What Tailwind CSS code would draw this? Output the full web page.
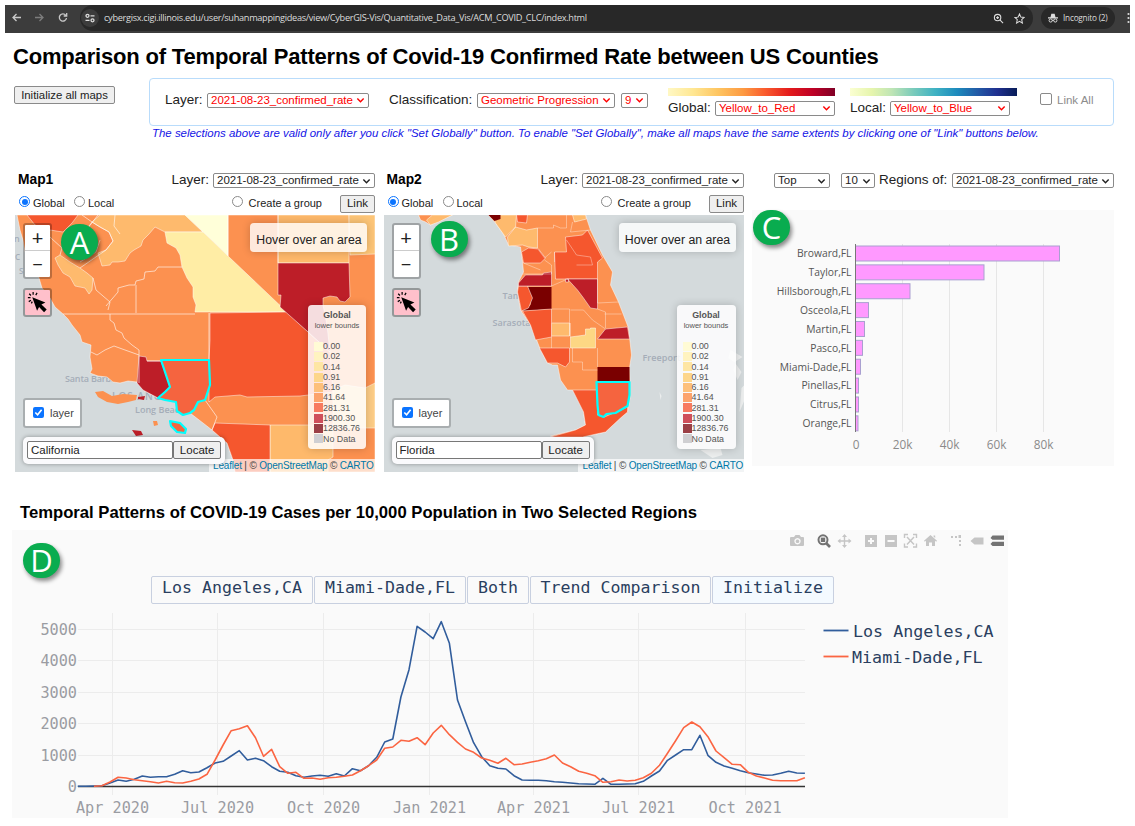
<!DOCTYPE html>
<html lang="en">
<head>
<meta charset="utf-8">
<title>Comparison of Temporal Patterns</title>
<script src="https://cdn.jsdelivr.net/npm/@tailwindcss/browser@4"></script>
</head>
<body class="w-[1135px] h-[826px] overflow-hidden bg-white text-black font-['Liberation_Sans',sans-serif] whitespace-nowrap">
<svg class="hidden">
  <symbol id="chev" viewBox="0 0 10 10"><path d="M1.5 2.7 5 6.3 8.5 2.7" fill="none" stroke="currentColor" stroke-width="1.6"/></symbol>
  <symbol id="click" viewBox="0 0 24 24"><path d="M6 6 21 12 16.500 14.200 22.500 20 19.500 23 13.800 17 11.500 21.500Z" fill="#000"/><path d="M1 6.500h3M2 11l2.500-1.500M2.500 2l2 2M7 0v3M11.500 1 10 3.500M5 13l1-2" stroke="#000" stroke-width="1.4"/></symbol>
</svg>

<!-- Browser bar -->
<header class="mt-[5px] ml-[5px] w-[1125px] h-[28px] bg-[#3c3c3c] flex items-center text-[#dcdcdc] font-['Open_Sans',sans-serif] overflow-hidden">
  <svg class="w-[75px] h-[28px] shrink-0" fill="none" stroke="#c8c8c8" stroke-width="1.3" viewBox="0 0 75 28"><path d="M16 12.500H8M11.500 9 8 12.500 11.500 16"/><path stroke="#7d7d7d" d="M30 12.500h8M34.500 9 38 12.500 34.500 16"/><path d="M60.800 10.300A3.600 3.600 0 1 0 61.500 13M61.700 8v3h-3"/></svg>
  <div class="flex items-center h-[26px] -mt-[2px] w-[953px] rounded-full bg-[#282828] shrink-0 pr-[8px]">
    <svg class="w-[18px] h-[18px] mr-[5px] ml-px" viewBox="0 0 18 18" fill="none" stroke="#ddd" stroke-width="1.3"><circle cx="9" cy="9" r="9" fill="#3c3c3c" stroke="none"/><circle cx="6.500" cy="6.800" r="1.500"/><path d="M9.500 6.800h4M4.500 11.300h4"/><circle cx="11.500" cy="11.300" r="1.500"/></svg>
    <span class="text-[9.200px] tracking-[-0.310px] grow">cybergisx.cigi.illinois.edu/user/suhanmappingideas/view/CyberGIS-Vis/Quantitative_Data_Vis/ACM_COVID_CLC/index.html</span>
    <svg class="w-[11px] h-[11px] mr-[10px]" viewBox="0 0 12 12" fill="none" stroke="#ddd" stroke-width="1.200"><circle cx="5" cy="5" r="3.500"/><path d="M7.500 7.500 11 11M3.500 5h3M5 3.500v3"/></svg>
    <svg class="w-[11px] h-[11px]" viewBox="0 0 12 12" fill="none" stroke="#ddd" stroke-width="1.100"><path d="M6 1 7.500 4.500 11 4.800 8.400 7.200 9.200 11 6 9 2.800 11 3.600 7.200 1 4.800 4.500 4.500Z"/></svg>
  </div>
  <div class="flex items-center h-[22px] -mt-[2px] ml-[8px] w-[74px] rounded-full bg-[#282828] pl-[7px] text-[8.200px] tracking-[-0.200px] shrink-0">
    <svg class="w-[10px] h-[10px] mr-[5px] shrink-0" viewBox="0 0 12 12" fill="#ddd"><path d="M3 5 4 1h4l1 4ZM0 5.200h12v1.300H0Z"/><g fill="none" stroke="#ddd" stroke-width="1.200"><circle cx="3.200" cy="9" r="1.900"/><circle cx="8.800" cy="9" r="1.900"/><path d="M5 8.800h2"/></g></svg>Incognito (2)
  </div>
  <svg class="ml-[12px] -mt-[3px] w-[3px] h-[12px] shrink-0" viewBox="0 0 3 12" fill="#ddd"><circle cx="1.500" cy="2" r="1.100"/><circle cx="1.500" cy="6" r="1.100"/><circle cx="1.500" cy="10" r="1.100"/></svg>
</header>

<h1 class="h-[46px] pt-[10px] pl-[13px] text-[22px] tracking-[-0.180px] leading-[27px] font-bold">Comparison of Temporal Patterns of Covid-19 Confirmed Rate between US Counties</h1>

<!-- Global controls -->
<section class="flex h-[48px] items-start pl-[14px]">
  <button class="mt-[7px] w-[101px] h-[18px] pt-px border border-[#8a8a8a] rounded-[2px] bg-[#efefef] text-[11.400px] leading-none text-[#222]">Initialize all maps</button>
  <div class="ml-[34px] -mt-px w-[965px] h-[48px] border border-[#b9dcfb] rounded-[4px] flex text-[13.500px] text-[#222]">
    <div class="flex items-center h-[18px] mt-[12px] ml-[15px] w-[224px]"><span class="w-[42px]">Layer:</span>
      <span class="flex items-center justify-between w-[162px] h-[15px] border border-[#8a8a8a] rounded-[2px] px-[3px] pt-px text-[11.500px] text-[#f00]">2021-08-23_confirmed_rate<svg class="w-[9px] h-[9px]"><use href="#chev"/></svg></span></div>
    <div class="flex items-center h-[18px] mt-[12px] w-[278px]"><span class="w-[88px]">Classification:</span>
      <span class="flex items-center justify-between w-[138px] h-[15px] border border-[#8a8a8a] rounded-[2px] px-[3px] pt-px text-[11.500px] text-[#f00]">Geometric Progression<svg class="w-[9px] h-[9px]"><use href="#chev"/></svg></span>
      <span class="flex items-center justify-between ml-[6px] w-[27px] h-[15px] border border-[#8a8a8a] rounded-[2px] px-[3px] pt-px text-[11.500px] text-[#f00]">9<svg class="w-[9px] h-[9px]"><use href="#chev"/></svg></span></div>
    <div class="mt-[9px] ml-px w-[182px]">
      <div class="w-[167px] h-[8px] bg-[linear-gradient(90deg,#fff8c4,#ffe793_15%,#fec561_30%,#fd9a42_45%,#fa5c2e_58%,#e31a1c_73%,#bd0026_87%,#800026)]"></div>
      <div class="flex items-center h-[18px] mt-[3px]"><span class="w-[47px]">Global:</span>
      <span class="flex items-center justify-between w-[120px] h-[15px] border border-[#8a8a8a] rounded-[2px] px-[3px] pt-px text-[11.500px] text-[#f00]">Yellow_to_Red<svg class="w-[9px] h-[9px]"><use href="#chev"/></svg></span></div>
    </div>
    <div class="mt-[9px] w-[190px]">
      <div class="w-[167px] h-[8px] bg-[linear-gradient(90deg,#fbffd2,#e6f5ad_13%,#bfe5b5_25%,#7acbbb_38%,#3fb2c3_51%,#1d8bbd_64%,#2258a5_77%,#203090_88%,#081d58)]"></div>
      <div class="flex items-center h-[18px] mt-[3px]"><span class="w-[40px]">Local:</span>
      <span class="flex items-center justify-between w-[120px] h-[15px] border border-[#8a8a8a] rounded-[2px] px-[3px] pt-px text-[11.500px] text-[#f00]">Yellow_to_Blue<svg class="w-[9px] h-[9px]"><use href="#chev"/></svg></span></div>
    </div>
    <div class="flex items-center mt-[13px] h-[18px] text-[#8c8c8c] text-[11.500px]"><span class="w-[12px] h-[12px] mb-[4px] mr-[5px] border border-[#8a8a8a] rounded-[2px]"></span>Link All</div>
  </div>
</section>
<p class="pl-[152px] h-[43px] text-[11.450px] leading-[13px] italic text-[#1414e6]">The selections above are valid only after you click "Set Globally" button. To enable "Set Globally", make all maps have the same extents by clicking one of "Link" buttons below.</p>

<!-- Maps and ranking -->
<main class="flex items-start pl-[15px] h-[302px] text-[#222]">
  <section class="w-[360px] mr-[8.500px] shrink-0">
    <div class="flex items-center h-[21px] pl-[3px] text-[13.800px]"><b class="grow text-black">Map1</b><span class="mr-[4px] text-[13.500px]">Layer:</span><span class="flex items-center justify-between w-[162px] h-[15px] border border-[#8a8a8a] rounded-[2px] px-[3px] pt-px text-[11.500px]">2021-08-23_confirmed_rate<svg class="w-[9px] h-[9px]"><use href="#chev"/></svg></span></div>
    <div class="flex items-center h-[24px] pl-[4px] pt-px text-[11px]">
      <span class="w-[11px] h-[11px] mb-[4px] rounded-full border-[1.500px] border-[#0b74ff] p-[1.500px] mr-[3px]"><span class="block w-full h-full rounded-full bg-[#0b74ff]"></span></span><span class="w-[41px]">Global</span>
      <span class="w-[11px] h-[11px] mb-[4px] rounded-full border border-[#8a8a8a] mr-[3px]"></span><span class="grow">Local</span>
      <span class="w-[11px] h-[11px] mb-[4px] rounded-full border border-[#8a8a8a] mr-[6px]"></span><span class="mr-[18px]">Create a group</span>
      <button class="w-[35px] h-[18px] pt-px border border-[#8a8a8a] rounded-[2px] bg-[#efefef] text-[11.500px] leading-none">Link</button>
    </div>
    <div class="relative h-[257px] overflow-hidden bg-[#d4dadc]">
      <svg class="block w-[360px] h-[257px]" viewBox="15 215 360 257" stroke="#fff" stroke-opacity=".6" stroke-width=".8" stroke-linejoin="round">
        <g stroke="none" fill="#a5adb8" font-family="Open Sans" font-weight="600" font-size="9"><text x="65" y="382" textLength="60">Santa Barbara</text><text x="112" y="400" font-size="10" textLength="75">LOS ANGELES</text><text x="135" y="413" textLength="50">Long Beach</text><text x="14" y="242">n</text><text x="15" y="260" font-size="8">C</text><text x="19" y="274" font-size="8">S</text></g>
        <path fill="#fc9150" d="M17 215 20 230 23 240 25 252 32 262 39 278 42 288 50 298 55 307 63 314 68 319 72 325 80 335 82 342 91 345 90 357 92 369 90 373 98 376 107 377 113 382 120 383 128 381 137 382 143 390 158 398 176 402 190 413 203 423 212 430 227 443 233 460 235 472H375V215Z"/>
        <path fill="#f5572e" d="M27 215H78L72 223 63 232 50 230 35 225Z"/>
        <path fill="#feba6d" d="M100 215H185L203 232H165L155 227 149 234 143 240 141 246 134 250 130 253 125 261 118 262 112 262 110 265 102 266 98 253 106 250 113 241 109 232 100 227 92 222Z"/>
        <path fill="#feba6d" d="M55 258 60 255 70 262 80 268 87 273 93 278 92 290 89 294 85 288 75 286 70 277 63 273 58 265Z"/>
        <path fill="#ffffd9" d="M185 215H228V256L203 232Z"/>
        <path fill="#ffeda5" d="M165 232H203L228 256 287 312H195L196 305 193 297 193 287 187 278 182 267 180 255 176 248 167 243Z"/>
        <path fill="#f5572e" d="M210 313 287 312 307 331 330 352 333 392 300 396 247 397 240 395 215 397 209 402V360L210 340Z"/>
        <path fill="#feb96b" d="M278 215H349V263H278Z"/>
        <path fill="#fdc577" d="M349 215H375V254L350 255Z"/>
        <path fill="#bd1e28" d="M278 263H349L350 297 345 302 340 301 337 297 330 296 323 298V305L327 325 330 352 307 331 280 307 281 295 278 295Z"/>
        <path fill="#feb96b" d="M270 425H333V457L328 460 328 472H270Z"/>
        <path fill="#f5572e" d="M215 423 270 425V472H235L233 460 227 443 212 430Z"/>
        <path fill="#fdcd86" d="M333 390 345 385 365 388 375 383V428H340L333 425Z"/>
        <path fill="#bd1e28" d="M139 356 146 357 147 361H161L165 372 170 387 158 398 143 390 137 383Z"/>
        <path fill="none" stroke-width="1" d="M63 314H195M110 314 110 320 114 323 116 330 122 333 124 338 132 345 139 350V383M91 352 97 355 105 350 114 346 125 350 139 355M106 306 118 292V288L129 285H135L136 281 144 279 145 272 155 271 158 267H182M136 285V313M209 313V360M228 215V256M278 215V263M147 361H209M205 400 217 417 212 430M82 215 92 222 100 227 109 232 113 241 106 250 80 268M93 278 96 290 110 302 108 310M98 215 84 233 92 222M40 228 62 248 60 255M115 215 114 226 120 234M100 240 96 252 80 262"/>
        <path fill="#fc9150" stroke="none" d="M95 392 103 391 112 396 123 394 137 395 136 400 128 402 118 404 107 402 98 397ZM153 421 157 421 158 425 154 426Z"/>
        <path fill="#bd1e28" stroke="none" d="M138 397 145 396 144 400 138 399ZM132 430 141 431 143 435 136 436Z"/>
        <path fill="#f5643f" stroke="#0ff" stroke-opacity="1" stroke-width="2.200" d="M161 360H209L210 385 205 400 198 402 194 410 190 413 183 415 177 411 176 402 165 400 158 398 165 392 170 387ZM170 421 180 423 186 429 185 433 177 432 171 426Z"/>
      </svg>
      <div class="absolute left-[8px] top-[8px] w-[29px] h-[56px] rounded-[3px] border-2 border-black/25 bg-white bg-clip-padding flex flex-col text-[20px] leading-[25px] text-center font-['Lato',sans-serif]"><span class="h-[26px] border-b border-[#ccc]">+</span><span>−</span></div>
      <div class="absolute left-[8px] top-[73px] w-[29px] h-[29px] rounded-[3px] border-2 border-black/30 bg-[#ffc0cb] bg-clip-padding p-[2px]"><svg class="w-[21px] h-[21px]"><use href="#click"/></svg></div>
      <div class="absolute left-[46px] top-[9px] w-[37px] h-[36px] rounded-full bg-[#09ac4f] text-white text-[31px] leading-[36px] text-center font-['Open_Sans',sans-serif] shadow-[2px_3px_4px_rgba(0,0,0,.45)]">A</div>
      <div class="absolute left-[235px] top-[8px] w-[117px] h-[29px] rounded-[4px] bg-white/80 text-[12.300px] leading-[34px] pl-px text-center shadow-[0_0_8px_rgba(0,0,0,.2)]">Hover over an area</div>
      <div class="absolute left-[293px] top-[90px] w-[58px] h-[144px] rounded-[4px] bg-white/85 shadow-[0_0_8px_rgba(0,0,0,.2)] text-[#555] pl-[6px] text-[8.900px]">
        <div class="text-center pr-[6px] pt-[4px] leading-[12px]"><b class="block">Global</b><span class="block text-[7.500px] leading-[10px]">lower bounds</span></div>
        <div data-legend class="mt-[10px] leading-[10.300px]"></div>
      </div>
      <div class="absolute left-[8px] top-[183px] w-[59px] h-[30px] rounded-[3px] border-2 border-black/20 bg-white bg-clip-padding flex items-center pl-[8px] text-[11px] text-[#444]"><svg class="w-[11px] h-[11px] mr-[6px] mb-[2px]" viewBox="0 0 11 11"><rect width="11" height="11" rx="2" fill="#0b74ff"/><path d="m2.300 5.500 2.300 2.300 4-5" fill="none" stroke="#fff" stroke-width="1.600"/></svg>layer</div>
      <div class="absolute left-[0] bottom-0 w-full h-[13px] pl-[194px] flex"><span class="grow bg-white/70 pl-[4px] text-[10px] tracking-[-0.180px] leading-[13px] text-[#444]"><span class="text-[#0078a8]">Leaflet</span> | © <span class="text-[#0078a8]">OpenStreetMap</span> © <span class="text-[#0078a8]">CARTO</span></span></div>
      <div class="absolute left-[8px] top-[222px] w-[202px] h-[27px] rounded-[5px] bg-[#fafafc] shadow-[0_0_4px_rgba(0,0,0,.35)] p-[4px] pb-[5px] flex text-[11.500px]"><span class="w-[147px] h-[18px] border border-[#777] bg-white pl-[3px] rounded-[2px] leading-[17px]">California</span><span class="w-[48px] h-[18px] border border-[#777] bg-[#efefef] text-center rounded-[2px] leading-[17px]">Locate</span></div>
    </div>
  </section>

  <section class="w-[360.500px] shrink-0 mr-[8px]">
    <div class="flex items-center h-[21px] pl-[3px] text-[13.800px]"><b class="grow text-black">Map2</b><span class="mr-[4px] text-[13.500px]">Layer:</span><span class="flex items-center justify-between w-[162px] h-[15px] border border-[#8a8a8a] rounded-[2px] px-[3px] pt-px text-[11.500px]">2021-08-23_confirmed_rate<svg class="w-[9px] h-[9px]"><use href="#chev"/></svg></span></div>
    <div class="flex items-center h-[24px] pl-[4px] pt-px text-[11px]">
      <span class="w-[11px] h-[11px] mb-[4px] rounded-full border-[1.500px] border-[#0b74ff] p-[1.500px] mr-[3px]"><span class="block w-full h-full rounded-full bg-[#0b74ff]"></span></span><span class="w-[41px]">Global</span>
      <span class="w-[11px] h-[11px] mb-[4px] rounded-full border border-[#8a8a8a] mr-[3px]"></span><span class="grow">Local</span>
      <span class="w-[11px] h-[11px] mb-[4px] rounded-full border border-[#8a8a8a] mr-[6px]"></span><span class="mr-[18px]">Create a group</span>
      <button class="w-[35px] h-[18px] pt-px border border-[#8a8a8a] rounded-[2px] bg-[#efefef] text-[11.500px] leading-none">Link</button>
    </div>
    <div class="relative h-[257px] overflow-hidden bg-[#d4dadc]">
      <svg class="block w-[361px] h-[257px]" viewBox="383.5 215 361 257" stroke="#fff" stroke-opacity=".6" stroke-width=".8" stroke-linejoin="round">
        <g stroke="none" fill="#a5adb8" font-family="Open Sans" font-weight="600" font-size="9"><text x="502" y="299">Tampa</text><text x="492" y="326">Sarasota</text><text x="642" y="361" textLength="38">Freeport</text></g>
        <path fill="#eceeee" stroke="none" d="M730 350 742 357 734 362 741 372 737 380 733 370 735 363 728 358ZM741 388 744 385V400L739 412ZM700 450 720 448 722 455 712 458ZM659 392 661 396 660 400Z"/>
        <path fill="#fc9150" d="M418 215H452L438 220 430 225 425 222 420 220ZM488 215 495 223 503 234 508 245 520 247 522 262 523 272 518 282 517 292 520 310 530 325 533 332 540 350 547 363 552 365 557 365 560 380 567 390 572 390 583 407 583 412 585 425 575 430 550 436 565 437 582 437 605 432 620 418 627 412 630 395 629 368 631 355 628 328 618 302 610 285 612 272 602 255 590 230 585 215Z"/>
        <path fill="#feba6d" d="M432 215H452L438 222 430 225 426 220ZM493 215H516L515 227 505 237 495 223ZM515 227 526 230 537 228V248L528 247 522 245 508 246 507 237ZM551 323H569V336H551ZM572 215H585L586 219 574 222Z"/>
        <path fill="#fdd784" d="M570 337 585 335V329H590V328H595V348H570Z"/>
        <path fill="#7a0000" stroke="none" d="M488 215H500V219L494 221ZM527 287H551V309L522 311 530 305 531 297ZM597 367H629V382H597Z"/>
        <path fill="#f5572e" d="M516 215H527L526 223 517 222ZM521 252 528 248 538 249 545 258 540 263 523 263ZM554 252H566L565 237 582 235 587 230 602 258 597 262V279H555ZM518 286H527L532 298 528 308 521 311 517 292ZM522 311 551 309V337L535 340 530 325ZM539 348H569V362L565 367 557 363 547 363ZM572 390H597V415L604 417 627 407V412L620 418 605 432 582 437H550L575 430 585 425 583 412Z"/>
        <path fill="#bd1e28" d="M518 283 525 275 542 275 543 273 551 272V286H518ZM567 279H597V309L590 308 583 298 577 290ZM597 339 605 329 627 327 629 339ZM565 279H568V282H565Z"/>
        <path fill="none" stroke-width=".8" stroke-opacity=".45" d="M522 274H551V265L544 260M554 252V262M537 228H553V225L560 228H566V215M551 286 567 279M551 309H569V336M551 337V348M597 279V303L618 302M597 348V367M583 310 592 320 605 329M604 314H621M597 309 605 312V328M572 348V362H582V370H597M572 222 570 232 590 230M566 240 576 255 590 257 592 265H576M570 337V323M523 263 540 270M538 250 544 258 551 252M570 310H583"/>
        <path fill="#f5643f" stroke="#0ff" stroke-opacity="1" stroke-width="2.200" d="M596 382H629V395L627 406 615 413 606 414 603 417 598 415 597 405Z"/>
      </svg>
      <div class="absolute left-[8px] top-[8px] w-[29px] h-[56px] rounded-[3px] border-2 border-black/25 bg-white bg-clip-padding flex flex-col text-[20px] leading-[25px] text-center font-['Lato',sans-serif]"><span class="h-[26px] border-b border-[#ccc]">+</span><span>−</span></div>
      <div class="absolute left-[8px] top-[73px] w-[29px] h-[29px] rounded-[3px] border-2 border-black/30 bg-[#ffc0cb] bg-clip-padding p-[2px]"><svg class="w-[21px] h-[21px]"><use href="#click"/></svg></div>
      <div class="absolute left-[47px] top-[6px] w-[37px] h-[36px] rounded-full bg-[#09ac4f] text-white text-[31px] leading-[36px] text-center font-['Open_Sans',sans-serif] shadow-[2px_3px_4px_rgba(0,0,0,.45)]">B</div>
      <div class="absolute left-[235px] top-[8px] w-[117px] h-[29px] rounded-[4px] bg-white/80 text-[12.300px] leading-[34px] pl-px text-center shadow-[0_0_8px_rgba(0,0,0,.2)]">Hover over an area</div>
      <div class="absolute left-[293px] top-[90px] w-[59px] h-[144px] rounded-[4px] bg-white/85 shadow-[0_0_8px_rgba(0,0,0,.2)] text-[#555] pl-[6px] text-[8.900px]">
        <div class="text-center pr-[6px] pt-[4px] leading-[12px]"><b class="block">Global</b><span class="block text-[7.500px] leading-[10px]">lower bounds</span></div>
        <div data-legend class="mt-[10px] leading-[10.300px]"></div>
      </div>
      <div class="absolute left-[8px] top-[183px] w-[59px] h-[30px] rounded-[3px] border-2 border-black/20 bg-white bg-clip-padding flex items-center pl-[8px] text-[11px] text-[#444]"><svg class="w-[11px] h-[11px] mr-[6px] mb-[2px]" viewBox="0 0 11 11"><rect width="11" height="11" rx="2" fill="#0b74ff"/><path d="m2.300 5.500 2.300 2.300 4-5" fill="none" stroke="#fff" stroke-width="1.600"/></svg>layer</div>
      <div class="absolute left-[0] bottom-0 w-full h-[13px] pl-[194px] flex"><span class="grow bg-white/70 pl-[5px] text-[10px] tracking-[-0.180px] leading-[13px] text-[#444]"><span class="text-[#0078a8]">Leaflet</span> | © <span class="text-[#0078a8]">OpenStreetMap</span> © <span class="text-[#0078a8]">CARTO</span></span></div>
      <div class="absolute left-[8px] top-[222px] w-[202px] h-[27px] rounded-[5px] bg-[#fafafc] shadow-[0_0_4px_rgba(0,0,0,.35)] p-[4px] pb-[5px] flex text-[11.500px]"><span class="w-[147px] h-[18px] border border-[#777] bg-white pl-[3px] rounded-[2px] leading-[17px]">Florida</span><span class="w-[48px] h-[18px] border border-[#777] bg-[#efefef] text-center rounded-[2px] leading-[17px]">Locate</span></div>
    </div>
  </section>

  <section class="w-[362px] shrink-0 relative">
    <div class="flex items-center h-[21px] pl-[22px] text-[13.500px]">
      <span class="flex items-center justify-between w-[56px] h-[15px] border border-[#8a8a8a] rounded-[2px] px-[3px] pt-px text-[11.500px]">Top<svg class="w-[9px] h-[9px]"><use href="#chev"/></svg></span>
      <span class="flex items-center justify-between ml-[11px] w-[34px] h-[15px] border border-[#8a8a8a] rounded-[2px] px-[3px] pt-px text-[11.500px]">10<svg class="w-[9px] h-[9px]"><use href="#chev"/></svg></span>
      <span class="ml-[4px] grow">Regions of:</span>
      <span class="flex items-center justify-between w-[162px] h-[15px] border border-[#8a8a8a] rounded-[2px] px-[3px] pt-px text-[11.500px]">2021-08-23_confirmed_rate<svg class="w-[9px] h-[9px]"><use href="#chev"/></svg></span>
    </div>
    <svg class="block mt-[19px] w-[362px] h-[256px] bg-[#fafafa]" viewBox="752 210 362 256" font-family="Open Sans" font-size="10.300" fill="#555">
      <path stroke="#e6e6e6" d="M902.500 244v188M949.500 244v188M996.500 244v188M1043.500 244v188"/>
      <g id="bars"></g>
      <path stroke="#777" d="M855.500 244v188"/>
      <g text-anchor="middle" font-size="11.800" fill="#8a8a8a"><text x="856" y="449">0</text><text x="902.500" y="449">20k</text><text x="949.500" y="449">40k</text><text x="996.500" y="449">60k</text><text x="1043.500" y="449">80k</text></g>
    </svg>
    <div class="absolute left-[1px] top-[40px] w-[37px] h-[35px] rounded-full bg-[#09ac4f] text-white text-[31px] leading-[35px] text-center font-['Open_Sans',sans-serif] shadow-[2px_3px_4px_rgba(0,0,0,.45)]">C</div>
  </section>
</main>

<!-- Temporal chart -->
<h2 class="h-[58px] pl-[20px] pt-[31px] text-[16.660px] leading-[20px] font-bold">Temporal Patterns of COVID-19 Cases per 10,000 Population in Two Selected Regions</h2>
<section class="relative ml-[12px] w-[996px] h-[288px] bg-[#fafafa] font-['DejaVu_Sans_Mono',monospace] text-[#2a3f5f]">
  <svg class="block w-[996px] h-[46px]" viewBox="12 530 996 46" fill="#c5c5c5">
    <path fill-rule="evenodd" d="M791 537h3l1.500-2h4l1.500 2h2q1 0 1 1v7q0 1-1 1h-12q-1 0-1-1v-7q0-1 1-1ZM797.500 538a3.200 3.200 0 1 0 .01 0ZM797.500 539.500a1.800 1.800 0 1 1-.01 0Z"/>
    <g fill="none" stroke="#737373" stroke-width="2"><circle cx="823" cy="539.800" r="4.500"/><path d="m826 543 4 4" stroke-width="2.600"/></g><rect x="820.800" y="537.600" width="4.400" height="4.400" fill="#737373"/>
    <path d="m844.500 534 2.500 3h-1.800v3.300h3.300v-1.800l3 2.500-3 2.500v-1.800h-3.300v3.300h1.800l-2.500 3-2.500-3h1.800v-3.300h-3.300v1.800l-3-2.500 3-2.500v1.800h3.300V537H842Z"/>
    <path fill-rule="evenodd" d="M865 535h12v12h-12ZM870 538v2h-2v2h2v2h2v-2h2v-2h-2v-2ZM885 535h12v12h-12ZM887.500 540v2h7v-2Z"/>
    <g fill="none" stroke="#c5c5c5" stroke-width="1.400"><path d="M904.500 538v-3.500h3.500M913 534.500h3.500v3.500M916.500 543.500v3.500h-3.500M908 547h-3.500v-3.500M907 537l7 7.500M914 537l-7 7.500"/></g>
    <path d="m930.500 535 6.500 5.800-.8.900-1.200-1v5.300h-3v-3.500h-3v3.500h-3v-5.300l-1.200 1-.8-.9ZM933.500 535.500h1.700v2.500l-1.700-1.500Z"/>
    <path d="M951 536h2v2h-2ZM955 536h2v2h-2ZM958.500 535h2.500v3h-2.500ZM959 540h2v2h-2ZM959 544h2v2h-2ZM970.500 541l4-3.500h9v7h-9Z"/>
    <path fill="#737373" d="M990.500 538 992.500 535.500H1004v4.300H992.500ZM990.500 544 992.500 541.700H1004v4.300H992.500Z"/>
  </svg>
  <div class="flex pl-[139px] gap-px h-[28px] text-[16.600px] leading-[21px] text-center">
    <span class="w-[162px] border border-[#c8d0e0] bg-[#fafafa] rounded-[2px]">Los Angeles,CA</span>
    <span class="w-[152px] border border-[#c8d0e0] bg-[#fafafa] rounded-[2px]">Miami-Dade,FL</span>
    <span class="w-[62px] border border-[#c8d0e0] bg-[#fafafa] rounded-[2px]">Both</span>
    <span class="w-[181px] border border-[#c8d0e0] bg-[#fafafa] rounded-[2px]">Trend Comparison</span>
    <span class="w-[122px] border border-[#c8d0e0] bg-[#f4faff] rounded-[2px]">Initialize</span>
  </div>
  <svg class="block w-[996px] h-[214px]" viewBox="12 604 996 214" font-family="DejaVu Sans Mono" font-size="15.200" fill="#9a9ca2">
    <path stroke="#ececec" d="M78 629.500H805M78 660.500H805M78 692.500H805M78 723.500H805M78 755.500H805M112.500 613V795M217.500 613V795M323.500 613V795M429.500 613V795M533.500 613V795M638.500 613V795M745.500 613V795"/>
    <path stroke="#333" stroke-width="1.300" d="M78 786.500H805"/>
    <g text-anchor="end"><text x="77" y="635">5000</text><text x="77" y="666">4000</text><text x="77" y="698">3000</text><text x="77" y="729">2000</text><text x="77" y="761">1000</text><text x="77" y="792">0</text></g>
    <g text-anchor="middle"><text x="112.500" y="813">Apr 2020</text><text x="217.500" y="813">Jul 2020</text><text x="323.500" y="813">Oct 2020</text><text x="429.500" y="813">Jan 2021</text><text x="533.500" y="813">Apr 2021</text><text x="638.500" y="813">Jul 2021</text><text x="745" y="813">Oct 2021</text></g>
    <g fill="none" stroke-width="1.600" stroke-linejoin="round"><polyline id="la" stroke="#315d9c"/><polyline id="mi" stroke="#fb6542"/></g>
    <path stroke="#315d9c" stroke-width="1.800" d="M823.500 630.500h25"/><path stroke="#fb6542" stroke-width="1.800" d="M823.500 656.500h25"/>
    <g font-size="16.700" fill="#2a3f5f"><text x="853" y="637">Los Angeles,CA</text><text x="852" y="663">Miami-Dade,FL</text></g>
  </svg>
  <div class="absolute left-[11px] top-[13px] w-[37px] h-[35px] rounded-full bg-[#09ac4f] text-white text-[31px] leading-[35px] text-center font-['Open_Sans',sans-serif] shadow-[2px_3px_4px_rgba(0,0,0,.45)]">D</div>
</section>

<script>
const legend=[['0.00','#fffbd5'],['0.02','#fff3c0'],['0.14','#fee6a4'],['0.91','#fdd68b'],['6.16','#fdc07b'],['41.64','#fca36c'],['281.31','#f77a60'],['1900.30','#cf4f5b'],['12836.76','#9b3f46'],['No Data','#cfcfd2']];
document.querySelectorAll('[data-legend]').forEach(e=>e.innerHTML=legend.map(([t,c])=>`<div class="flex items-center h-[10.300px]"><i class="w-[9px] h-[9px] shrink-0" style="background:${c}"></i><span>${t}</span></div>`).join(''));
const bars=[['Broward,FL',204],['Taylor,FL',128.500],['Hillsborough,FL',54.500],['Osceola,FL',13],['Martin,FL',9],['Pasco,FL',7],['Miami-Dade,FL',5],['Pinellas,FL',3],['Citrus,FL',3],['Orange,FL',2.500]];
document.getElementById('bars').innerHTML=bars.map(([n,w],i)=>`<rect x="855.500" y="${246+i*18.87}" width="${w}" height="15" fill="#ff99ff" stroke="#a9a0d0"/><text x="851.500" y="${257.300+i*18.87}" text-anchor="end">${n}</text>`).join('');
const line=(id,start,a,b)=>{const ys=[...a.map(v=>495+v/3),...b.map(v=>570+v/3)];document.getElementById(id).setAttribute('points',ys.map((y,i)=>`${(77.700+(i+start)*8.08).toFixed(1)},${y.toFixed(1)}`).join(' '));};
line('la',0,[874,874,873,872,864,855,859,853,843,847,845,845,838,827,833,831,818,804,799,783,767,795,790,797,815,829,832,842,847,843,841,844,836,843,821,827,812,787,741,732,606,524],[169,186,206,155,220,390,455,518,560,587,595,597,617,630,631,631,632,635,637,639,641,642,643,625,643,643,642,641,634,618,603,571,555,539,539,496,556,577,588,595,602,608,612,616,615,610,604,609,610]);
line('mi',2,[874,872,861,847,849,854,857,860,864,859,863,864,859,852,838,795,750,707,701,692,728,784,763,815,835,832,850,849,853,848,847,844,840,827,812,795,760,756,736,739],[503,524,489,466,494,517,537,547,564,571,580,565,584,582,577,572,566,555,579,590,604,610,617,637,635,630,633,631,623,610,586,550,512,473,456,470,500,543,563,583,584,607,618,624,631,632,632,632,623]);
</script>
</body>
</html>
